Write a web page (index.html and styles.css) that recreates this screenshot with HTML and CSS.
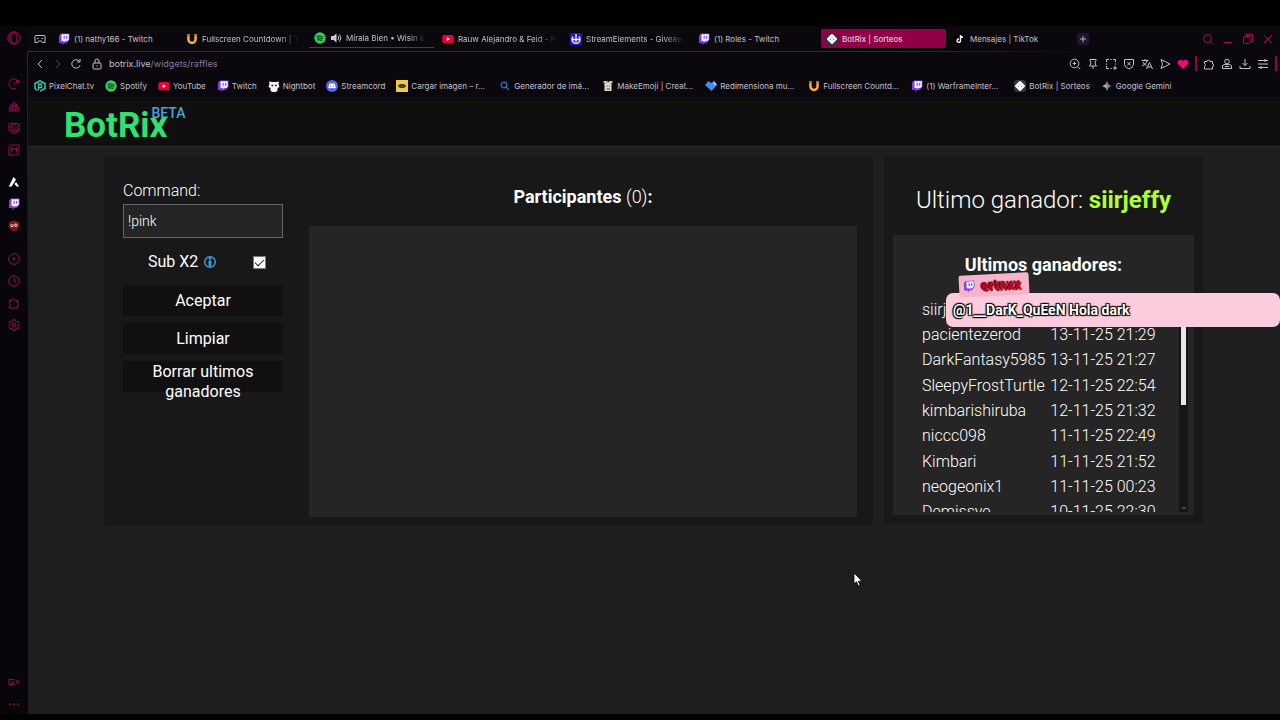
FILE: index.html
```
<!DOCTYPE html>
<html lang="es">
<head>
    <meta charset="UTF-8">
    <title>BotRix | Sorteos</title>
    <link rel="stylesheet" href="styles.css">
</head>
<body>
    <!-- Iconos compartidos -->
    <svg class="sprite" aria-hidden="true">
        <symbol id="twitch" viewBox="0 0 12 12"><path d="M1 2.500 3 .5h8.500v6.500L8.500 10H6.500l-2 2v-2H1z" fill="#7b3fe4"/><path d="M3.500 1.200h7.300v5.300L9.300 8H7.200L5.800 9.300V8H3.500z" fill="#f4efff"/><path d="M6.200 3v2.800M8.700 3v2.800" stroke="#7b3fe4" stroke-width="1.100"/></symbol>
        <symbol id="spotify" viewBox="0 0 12 12"><circle cx="6" cy="6" r="5.700" fill="#2bd760"/><path d="M2.800 4.200q3.300-.9 6.500.6M3.100 6.100q2.900-.7 5.600.6M3.400 7.900q2.300-.5 4.500.5" fill="none" stroke="#0b2a15" stroke-width="1" stroke-linecap="round"/></symbol>
        <symbol id="youtube" viewBox="0 0 12 12"><rect x=".3" y="2" width="11.400" height="8.200" rx="2" fill="#e8003a"/><path d="M4.800 4.300v3.600L8 6.100z" fill="#fff"/></symbol>
        <symbol id="countdown" viewBox="0 0 12 12"><path d="M2.400 1v5.300a3.600 3.600 0 0 0 7.200 0V1" fill="none" stroke="#f6b03c" stroke-width="2.500"/><path d="M1.100 1h2.600v2.200H1.100zM8.300 1h2.600v2.200H8.300z" fill="#c8642c"/></symbol>
        <symbol id="botrix" viewBox="0 0 12 12"><rect width="12" height="12" rx="3" fill="#343440"/><path d="m6 2 4 4-4 4-4-4z" fill="#fff" stroke="#fff" stroke-width="2" stroke-linejoin="round"/><path d="M5.500 3.700h1v1h-1zM4 6h1v1H4zM7 6h1v1H7z" fill="#777"/></symbol>
        <symbol id="puzzle" viewBox="0 0 12 12"><path d="M1.500 3.500H4a1.500 1.500 0 1 1 3 0h2.500V6a1.300 1.300 0 0 1 0 2.600V11h-8V8.500a1.300 1.300 0 0 0 0-2.500z"/></symbol>
    </svg>

    <div class="browser">
        <nav class="sidebar" aria-label="Barra lateral">
            <a href="#" class="opera" aria-label="Opera"><svg class="line" viewBox="0 0 14 14"><circle cx="7" cy="7" r="6.200"/><ellipse cx="7" cy="7" rx="3" ry="5.800"/><path d="M4.800 2.500C1.500 4 1.500 10 4.800 11.500"/></svg></a>
            <div class="side-group">
                <a href="#" aria-label="GX Control"><svg class="line" viewBox="0 0 12 12"><path d="M8 10.500A5 5 0 1 1 10.800 5M6 6.500l4-3.500M8 2.500h2.700v2.700"/></svg></a>
                <a href="#" aria-label="GX Cleaner"><svg class="line" viewBox="0 0 12 12"><path d="M6 .8v3M3.500 4h5v2h-5zM2.500 6h7l1.300 5H1.200zM4.500 8.500V11M7.500 8.500V11M1 8h10"/></svg></a>
                <a href="#" aria-label="Escritorio"><svg class="line" viewBox="0 0 12 12"><rect x=".8" y="1.500" width="10.400" height="7.500" rx="1.500"/><path d="M1.500 5.500 5 2M2 8.500 8 2M5 8.500 10.500 3M8.500 8.500l2.300-2.300M3 11h6"/></svg></a>
                <a href="#" aria-label="GX Mods"><svg class="line" viewBox="0 0 12 12"><path d="M2 1h9v9M10.500 11H1V2M3.500 8.500v-5L6 6l2.500-2.500v5"/></svg></a>
            </div>
            <div class="side-group side-apps">
                <a href="#" aria-label="Aplicación"><svg viewBox="0 0 12 12"><path d="M5.500 1 8 3.500 3.700 10.500H.8zM8 6l3.200 4.500H8.500L6.500 8z" fill="#fff"/></svg></a>
                <a href="#" aria-label="Twitch"><svg><use href="#twitch"/></svg></a>
                <a href="#" aria-label="Escudo"><svg viewBox="0 0 12 12"><path d="m6 .5 5 1.600V6q0 3.500-5 5.500Q1 9.500 1 6V2.100z" fill="#8c0f18"/><path d="M3 4v2.500h2V4M7 4v2.500h1.200q1-.2 1-1.200T8.200 4z" fill="none" stroke="#fff" stroke-width=".8"/></svg></a>
            </div>
            <div class="side-group">
                <a href="#" aria-label="Reproductor"><svg class="line" viewBox="0 0 12 12"><circle cx="6" cy="6" r="5.300"/><path d="M5.300 4.800 7 6 5.300 7.200z"/></svg></a>
                <a href="#" aria-label="Historial"><svg class="line" viewBox="0 0 12 12"><circle cx="6" cy="6" r="5.300"/><path d="M6 3v3.200l2 .8"/></svg></a>
                <a href="#" aria-label="Extensiones"><svg class="line"><use href="#puzzle"/></svg></a>
                <a href="#" aria-label="Ajustes"><svg class="line" viewBox="0 0 12 12"><path d="M4.500 2 5 .7h2L7.500 2l1.200.6 1.400-.4 1 1.800-1 1v1.800l1 1-1 1.800-1.400-.4-1.200.6L7 11.300H5L4.500 10l-1.200-.6-1.400.4-1-1.800 1-1V5.200l-1-1 1-1.800 1.400.4z"/><circle cx="6" cy="6" r="1.800"/></svg></a>
            </div>
            <div class="side-group side-bottom">
                <a href="#" aria-label="GX"><svg class="line" viewBox="0 0 12 12"><path d="M5.500 3.500H1v5h4.500v-2.500H3M7 3.500l4.500 5M11.500 3.500 7 8.500"/></svg></a>
                <a href="#" aria-label="Más"><svg viewBox="0 0 12 12"><path d="M1 5.500h2v1.500H1zM5 5.500h2v1.500H5zM9 5.500h2v1.500H9z" fill="#7d0a48"/></svg></a>
            </div>
        </nav>

        <div class="window">
            <div class="tab-bar">
                <button class="icon-btn pad" aria-label="GX Corner"><svg class="line" viewBox="0 0 12 12"><path d="M1 3.500q0-1 1-1h8q1 0 1 1v6H8.500L7.500 8h-3l-1 1.500H1zM3 5.500h1.500M7.500 5.500H9"/></svg></button>
                <a href="#" class="tab"><svg><use href="#twitch"/></svg><span>(1) nathy166 - Twitch</span></a>
                <a href="#" class="tab"><svg><use href="#countdown"/></svg><span class="fade">Fullscreen Countdown | T</span></a>
                <a href="#" class="tab playing"><svg><use href="#spotify"/></svg><svg viewBox="0 0 12 12"><path d="M1 4h2.500l3-2.500v9L3.500 8H1z" fill="#ccc8d4"/><path d="M8 4q1.500 2 0 4M9.500 2.500q3 3.500 0 7" fill="none" stroke="#ccc8d4"/></svg><span class="fade">Mírala Bien • Wisin &amp;</span></a>
                <a href="#" class="tab"><svg><use href="#youtube"/></svg><span class="fade">Rauw Alejandro &amp; Feid - R</span></a>
                <a href="#" class="tab"><svg viewBox="0 0 12 12"><rect width="12" height="12" rx="1" fill="#2412c4"/><path d="M3.200 3.500a4 4 0 1 0 5.600 0M6 1v8M2.500 6.500h7" fill="none" stroke="#fff" stroke-width="1.300"/></svg><span class="fade">StreamElements - Giveaw</span></a>
                <a href="#" class="tab"><svg><use href="#twitch"/></svg><span>(1) Roles - Twitch</span></a>
                <a href="#" class="tab active"><svg><use href="#botrix"/></svg><span>BotRix | Sorteos</span></a>
                <a href="#" class="tab"><svg viewBox="0 0 12 12"><rect width="12" height="12" rx="2" fill="#000"/><path d="M6.500 2v5.700A1.700 1.700 0 1 1 5 6M6.500 2.500q.6 1.700 2.500 1.800" fill="none" stroke="#fff" stroke-width="1.400"/></svg><span>Mensajes | TikTok</span></a>
                <button class="new-tab" aria-label="Nueva pestaña"><svg viewBox="0 0 12 12"><path d="M6 3v6M3 6h6" stroke="#b9a9cc" stroke-width="1"/></svg></button>
                <div class="window-controls">
                    <button class="icon-btn" aria-label="Buscar"><svg class="line" viewBox="0 0 12 12"><circle cx="5.500" cy="5.500" r="4"/><path d="m8.500 8.500 2.500 2.500"/></svg></button>
                    <button class="icon-btn" aria-label="Minimizar"><svg class="line" viewBox="0 0 12 12"><path d="M2 9.500h8"/></svg></button>
                    <button class="icon-btn" aria-label="Restaurar"><svg class="line" viewBox="0 0 12 12"><rect x="1.500" y="3.500" width="6.500" height="7" rx="1"/><path d="M4 3V1.500h6.500v7H8.500"/></svg></button>
                    <button class="icon-btn" aria-label="Cerrar"><svg class="line" viewBox="0 0 12 12"><path d="m2 2 8 8M10 2l-8 8"/></svg></button>
                </div>
            </div>

            <div class="address-bar">
                <button class="icon-btn" aria-label="Atrás"><svg class="line" viewBox="0 0 12 12"><path d="M8 2 4 6l4 4"/></svg></button>
                <button class="icon-btn dim" aria-label="Adelante"><svg class="line" viewBox="0 0 12 12"><path d="m4 2 4 4-4 4"/></svg></button>
                <button class="icon-btn" aria-label="Recargar"><svg class="line" viewBox="0 0 12 12"><path d="M10 7.200A4.200 4.200 0 1 1 9.300 3.300M10 1v3H7"/></svg></button>
                <div class="url">
                    <svg class="line" viewBox="0 0 12 12"><rect x="2" y="5" width="8" height="6" rx="1"/><path d="M4 5V3q0-2 2-2t2 2v2M6 7.500v1"/></svg>
                    <span>botrix.live<span class="path">/widgets/raffles</span></span>
                </div>
                <div class="tools">
                    <button class="icon-btn" aria-label="Zoom"><svg class="line" viewBox="0 0 12 12"><circle cx="5.500" cy="5.500" r="4.300"/><path d="m8.700 8.700 2.500 2.500M5.500 3.700v3.600M3.700 5.500h3.600"/></svg></button>
                    <button class="icon-btn" aria-label="Fijar"><svg class="line" viewBox="0 0 12 12"><path d="M3 1.500h6v1.300L8.200 4v2L9.500 8h-7l1.300-2V4L3 2.800zM6 8v3"/></svg></button>
                    <button class="icon-btn" aria-label="Captura"><svg class="line" viewBox="0 0 12 12"><path d="M1.500 4V1.500H4M5.500 1.500h1.200M8 1.500h2.500V4M10.500 5.500v1.200M1.500 5.500v1.200M1.500 8v2.500H4M5.500 10.500h1.200M10 8v4M8 10h4"/></svg></button>
                    <button class="icon-btn" aria-label="Bloqueador"><svg class="line" viewBox="0 0 12 12"><path d="M1.500 1.500h9v5q0 2.500-4.500 4.500-4.500-2-4.500-4.500zM4.300 4l3.400 3.400M7.700 4 4.300 7.400"/></svg></button>
                    <button class="icon-btn" aria-label="Traducir"><svg class="line" viewBox="0 0 12 12"><path d="M.5 2.500h7M4 1v1.500M6.500 2.500Q5.500 6 1 8M2 4q1 2.500 3.500 3.500M5.500 11l3-6.500 3 6.500M6.500 9h4"/></svg></button>
                    <button class="icon-btn" aria-label="Enviar"><svg class="line" viewBox="0 0 12 12"><path d="m2 1.500 9 4.500-9 4.500L3.500 6z"/></svg></button>
                    <button class="icon-btn" aria-label="Favorito"><svg viewBox="0 0 12 12"><path d="M6 11 1.300 6.200C-1 3 3.500-.3 6 3c2.500-3.300 7 0 4.700 3.200z" fill="#f5047f"/></svg></button>
                    <i class="bar"></i>
                    <button class="icon-btn" aria-label="Extensiones"><svg class="line"><use href="#puzzle"/></svg></button>
                    <button class="icon-btn" aria-label="Perfil"><svg class="line" viewBox="0 0 12 12"><circle cx="6" cy="3.500" r="2.300"/><path d="M3.500 6.500h5l2 1v3h-9v-3zM4 8.500h4"/></svg></button>
                    <button class="icon-btn" aria-label="Descargas"><svg class="line" viewBox="0 0 12 12"><path d="M6 1v6.500M3.500 5 6 7.500 8.500 5M1 8v2.500h10V8"/></svg></button>
                    <button class="icon-btn" aria-label="Menú"><svg class="line" viewBox="0 0 12 12"><path d="M1 2.500h10M1 6h10M1 9.500h10M8 1v3M4 8v3"/></svg></button>
                    <i class="bar"></i>
                </div>
            </div>

            <div class="bookmarks">
                <a href="#"><svg viewBox="0 0 12 12"><path d="M3.500 10.500 1 8.500v-5L6 .8l5 2.700v5L6 11.200" fill="none" stroke="#35c9b4" stroke-width="1.500"/><path d="M4.500 10V4h3v3.500h-3" fill="none" stroke="#35c9b4" stroke-width="1.300"/></svg>PixelChat.tv</a>
                <a href="#"><svg><use href="#spotify"/></svg>Spotify</a>
                <a href="#"><svg><use href="#youtube"/></svg>YouTube</a>
                <a href="#"><svg><use href="#twitch"/></svg>Twitch</a>
                <a href="#"><svg viewBox="0 0 12 12"><path d="M1 1.500 3.500 2h5L11 1.500 10.500 4l1 3-2 1v2.500L8 12H4l-1.500-1.500V8l-2-1 1-3z" fill="#f4f4f4"/><path d="M3.500 5.500h1.700M7 5.500h1.700" stroke="#111" stroke-width="1.300"/></svg>Nightbot</a>
                <a href="#"><svg viewBox="0 0 12 12"><circle cx="6" cy="6" r="6" fill="#5965e8"/><path d="M3.500 3.500h5l1.300 4L8 8.800 7.500 8h-3l-.5.800-1.800-1.300z" fill="#fff"/><path d="M4.200 5.500h1v1.200h-1zM6.800 5.500h1v1.200h-1z" fill="#5965e8"/></svg>Streamcord</a>
                <a href="#" class="long"><svg viewBox="0 0 12 12"><path d="M0 0h12v12H0z" fill="#efc94c"/><path d="M1.500 6 4 4h4l2.500 2L8 8H4z" fill="#4b421f"/></svg>Cargar imagen – r...</a>
                <a href="#" class="long"><svg viewBox="0 0 12 12"><circle cx="5" cy="5" r="2.800" fill="none" stroke="#2378c8" stroke-width="1.200"/><path d="m7 7 3 3" stroke="#2378c8" stroke-width="1.300"/></svg>Generador de imá...</a>
                <a href="#" class="long"><svg viewBox="0 0 12 12"><path d="M1 1h3l2 1.500L8 1h3L9.500 5v6h-7V5z" fill="#ded7cb"/><path d="m1 1 2 3M11 1 9 4M4.500 6h1M7 6h1M4.500 9H8" stroke="#75452f"/><path d="M4 1h2v1.500H4z" fill="#5abf58"/></svg>MakeEmoji | Creat...</a>
                <a href="#" class="long"><svg viewBox="0 0 12 12"><path d="m3.500 1 2.500 2L9 1l3 4-5.500 6L0 5z" fill="#438bf4"/><path d="M9 1 12 5 8.500 4.500z" fill="#a9cffc"/></svg>Redimensiona mu...</a>
                <a href="#" class="long"><svg><use href="#countdown"/></svg>Fullscreen Countd...</a>
                <a href="#" class="long"><svg><use href="#twitch"/></svg>(1) WarframeInter...</a>
                <a href="#"><svg><use href="#botrix"/></svg>BotRix | Sorteos</a>
                <a href="#"><svg viewBox="0 0 12 12"><path d="M6 1q.8 4.200 5 5-4.200.8-5 5-.8-4.200-5-5 4.200-.8 5-5" fill="#5b8def"/><path d="M6 1q.4 3 2 4L6 6 4 5q1.600-1 2-4" fill="#e25a54"/><path d="M1 6q3-.4 3.800-1.500L6 6 4.500 7.500Q3.500 6.500 1 6" fill="#ddb93e"/><path d="M6 11q-.5-2.700-1.500-3.500L6 6.500l.7 1.500z" fill="#45b56a"/></svg>Google Gemini</a>
            </div>

            <div class="page">
                <header class="header">
                    <a href="#" class="logo">BotRix<span class="beta">BETA</span></a>
                </header>

                <main class="content">
                    <section class="panel raffle">
                        <form class="controls">
                            <label class="command-label" for="command">Command:</label>
                            <input type="text" id="command" class="command" value="!pink">
                            <div class="sub-row">
                                <label for="sub">Sub X2</label>
                                <svg viewBox="0 0 12 12"><circle cx="6" cy="6" r="5.300" fill="none" stroke="#3c9fe0" stroke-width="1.400"/><path d="M6 1.500v2M6 4.500v6" stroke="#3c9fe0" stroke-width="2.800"/></svg>
                                <input type="checkbox" id="sub" class="check" checked>
                            </div>
                            <button type="button" class="btn">Aceptar</button>
                            <button type="button" class="btn">Limpiar</button>
                            <button type="button" class="btn">Borrar ultimos ganadores</button>
                        </form>
                        <div class="participants">
                            <h2><b>Participantes</b> (0)<b>:</b></h2>
                            <div class="list"></div>
                        </div>
                    </section>

                    <section class="panel winners">
                        <h1>Ultimo ganador: <b>siirjeffy</b></h1>
                        <div class="history">
                            <h2><b>Ultimos ganadores:</b></h2>
                            <div class="scroll">
                                <table>
                                    <tr><td>siirjeffy</td><td></td></tr>
                                    <tr><td>pacientezerod</td><td>13-11-25 21:29</td></tr>
                                    <tr><td>DarkFantasy5985</td><td>13-11-25 21:27</td></tr>
                                    <tr><td>SleepyFrostTurtle</td><td>12-11-25 22:54</td></tr>
                                    <tr><td>kimbarishiruba</td><td>12-11-25 21:32</td></tr>
                                    <tr><td>niccc098</td><td>11-11-25 22:49</td></tr>
                                    <tr><td>Kimbari</td><td>11-11-25 21:52</td></tr>
                                    <tr><td>neogeonix1</td><td>11-11-25 00:23</td></tr>
                                    <tr><td>Demissye</td><td>10-11-25 22:30</td></tr>
                                </table>
                                <div class="scrollbar">
                                    <div class="thumb"></div>
                                    <svg viewBox="0 0 8 8"><path d="m2 3 2 2 2-2" fill="none" stroke="#777"/></svg>
                                </div>
                            </div>
                        </div>
                    </section>
                </main>
            </div>
        </div>
    </div>

    <!-- Mensaje del chat sobre la página -->
    <div class="chat">
        <div class="chat-user"><svg><use href="#twitch"/></svg>ertnxx</div>
        <p class="chat-text">@1__DarK_QuEeN Hola dark</p>
    </div>

    <svg class="cursor" viewBox="0 0 10 15"><path d="M1 1v11l2.500-2.300L5.300 14l1.900-.8-1.800-4H9z" fill="#fff" stroke="#000" stroke-width=".8"/></svg>
</body>
</html>
```
FILE: styles.css
```
* {
    margin: 0;
    padding: 0;
    box-sizing: border-box;
}

body {
    position: relative;
    height: 100vh;
    overflow: hidden;
    background: #000;
    color: #fff;
    font-family: Roboto, sans-serif;
}

a {
    color: inherit;
    text-decoration: none;
}

b {
    font-weight: 700;
}

button {
    border: none;
    background: none;
    color: inherit;
    font: inherit;
}

svg {
    display: block;
    flex: none;
    width: 12px;
    height: 12px;
}

.sprite {
    position: absolute;
    width: 0;
    height: 0;
}

.line {
    fill: none;
    stroke: currentColor;
    stroke-width: 1;
}

/* Navegador */
.browser {
    display: flex;
    height: 100vh;
    padding: 26px 0 6px;
}

.sidebar {
    display: flex;
    flex-direction: column;
    align-items: center;
    flex: 0 0 28px;
    padding: 5px 1px 4px 0;
    background: linear-gradient(#5e0a36, transparent) right 25px / 1px 290px no-repeat, #08060b;
    color: #9c0858;
}

.opera {
    margin-bottom: 33px;
    color: #b00658;
}

.opera svg {
    width: 14px;
    height: 14px;
}

.side-group {
    display: flex;
    flex-direction: column;
    gap: 10px;
    margin-bottom: 20px;
}

.side-apps {
    margin-bottom: 21px;
}

.side-bottom {
    margin-top: auto;
    margin-bottom: 0;
}

.window {
    display: flex;
    flex-direction: column;
    flex: 1;
    min-width: 0;
    background: #0a080d;
    color: #c4c0cc;
    font-family: Inter, sans-serif;
    font-size: 8px;
}

.tab-bar {
    display: flex;
    align-items: center;
    gap: 3px;
    height: 25px;
    padding: 0 6px;
}

.icon-btn {
    display: block;
    flex: none;
}

.pad {
    margin-right: 4px;
}

.tab {
    display: flex;
    align-items: center;
    gap: 4px;
    flex: 0 1 125px;
    min-width: 0;
    height: 19px;
    padding: 0 8px 0 5px;
    border-radius: 2px;
}

.tab span {
    white-space: nowrap;
}

.fade {
    -webkit-mask-image: linear-gradient(to right, #000 80%, transparent);
    mask-image: linear-gradient(to right, #000 80%, transparent);
}

.playing {
    border-bottom: 1px solid #b0064f;
    border-radius: 0;
}

.active {
    background: #8f0046;
    color: #ece0e8;
}

.new-tab {
    background: #1e172a;
    border-radius: 2px;
}

.window-controls {
    display: flex;
    gap: 8px;
    margin-left: auto;
    color: #b00658;
}

.address-bar {
    display: flex;
    align-items: center;
    gap: 6px;
    height: 24px;
    padding: 1px 3px 0 6px;
    background: linear-gradient(to right, #6e0a3c 70%, transparent 85%) top / 100% 1px no-repeat;
}

.dim {
    opacity: 0.3;
}

.url {
    display: flex;
    align-items: center;
    gap: 6px;
    margin-left: 3px;
    font-size: 9px;
}

.path {
    color: #8577a0;
}

.tools {
    display: flex;
    align-items: center;
    gap: 6px;
    margin-left: auto;
}

.bar {
    width: 2px;
    height: 15px;
    background: #96004c;
}

.bookmarks {
    display: flex;
    align-items: center;
    gap: 11px;
    height: 22px;
    padding: 0 6px;
    white-space: nowrap;
}

.bookmarks a {
    display: flex;
    align-items: center;
    gap: 3px;
}

.bookmarks .long {
    width: 92px;
}

/* BotRix */
.page {
    flex: 1;
    background: #1e1e1e;
    color: #fff;
    font-family: Roboto, sans-serif;
    font-size: 16px;
    font-weight: 300;
}

.header {
    height: 50px;
    padding: 8px 36px;
    background: #0f0f0f;
    border-bottom: 1px solid #2c2c2c;
}

.logo {
    position: relative;
    display: inline-block;
    color: #2fe26f;
    font-size: 35px;
    font-weight: 700;
    line-height: 42px;
}

.beta {
    position: absolute;
    top: 0;
    right: -18px;
    color: #47a5d8;
    font-size: 14px;
    font-weight: 500;
    line-height: 16px;
}

.content {
    display: grid;
    grid-template-columns: 769fr 319fr;
    gap: 11px;
    align-items: start;
    padding: 9px 77px 0 76px;
}

.panel {
    background: #181818;
    border-radius: 3px;
}

.raffle {
    display: flex;
    gap: 26px;
    padding: 25px 16px 9px 19px;
}

.controls {
    display: flex;
    flex-direction: column;
    flex: 0 0 160px;
}

.command-label {
    line-height: 20px;
}

.command {
    width: 100%;
    height: 34px;
    margin-top: 3px;
    padding: 0 4px;
    border: 1px solid #666;
    background: #252525;
    color: #fff;
    font: 300 14px Roboto, sans-serif;
}

.sub-row {
    display: flex;
    align-items: center;
    gap: 6px;
    margin: 14px 0 13px;
    padding: 0 17px 0 25px;
    font-weight: 400;
    line-height: 20px;
}

.check {
    width: 13px;
    height: 13px;
    margin-left: auto;
    appearance: none;
    border: 1px solid #777;
    background: #fff;
}

.check:checked::after {
    content: "";
    display: block;
    width: 8px;
    height: 4px;
    margin: 2px 1px;
    border: solid #222;
    border-width: 0 0 1px 1px;
    transform: rotate(-45deg);
}

.btn {
    height: 31px;
    margin-bottom: 7px;
    padding: 1px 6px;
    background: #101010;
    font-weight: 400;
    line-height: 20px;
}

.participants {
    flex: 1;
    padding-top: 5px;
    text-align: center;
}

h2 {
    font-size: 18px;
    font-weight: 300;
    line-height: 22px;
}

.list {
    height: 291px;
    margin-top: 18px;
    background: #252525;
}

.winners {
    padding: 28px 9px 9px;
}

h1 {
    font-size: 24px;
    font-weight: 300;
    line-height: 32px;
    text-align: center;
}

h1 b {
    color: #adff2f;
}

.history {
    margin-top: 19px;
    padding: 19px 6px 3px 29px;
    background: #252525;
}

.history h2 {
    padding-right: 23px;
    text-align: center;
}

.scroll {
    display: flex;
    align-items: flex-start;
    justify-content: space-between;
    height: 215px;
    margin-top: 21px;
    overflow: hidden;
}

table {
    border-collapse: collapse;
    white-space: nowrap;
}

td {
    padding-right: 5px;
    line-height: 25px;
}

tr:nth-child(3n) td {
    line-height: 26px;
}

.scrollbar {
    display: flex;
    flex-direction: column;
    align-items: center;
    justify-content: space-between;
    width: 9px;
    height: 215px;
    padding-top: 11px;
    background: #151515;
}

.thumb {
    width: 5px;
    height: 97px;
    background: #e8e8e8;
}

.scrollbar svg {
    width: 8px;
    height: 8px;
}

/* Chat */
.chat {
    position: absolute;
    top: 274px;
    right: 0;
    width: 334px;
}

.chat-user {
    position: relative;
    z-index: 1;
    display: flex;
    align-items: center;
    gap: 6px;
    width: 70px;
    height: 22px;
    margin-left: 13px;
    padding-left: 4px;
    border-radius: 2px;
    background: #f7b3cb;
    color: #d3001c;
    font-size: 14px;
    font-weight: 700;
    text-shadow: 1px 1px 1px #300, -1px -1px 1px #300;
    transform: rotate(-3deg);
}

.chat-text {
    height: 34px;
    margin-top: -3px;
    padding-left: 7px;
    border-radius: 7px;
    background: #fccbdd;
    font-size: 14px;
    font-weight: 700;
    line-height: 34px;
    text-shadow: 1px 1px 1px #000, -1px -1px 1px #000, 1px -1px 1px #000, -1px 1px 1px #000;
}

.cursor {
    position: absolute;
    top: 572px;
    left: 853px;
    width: 10px;
    height: 15px;
}
```
